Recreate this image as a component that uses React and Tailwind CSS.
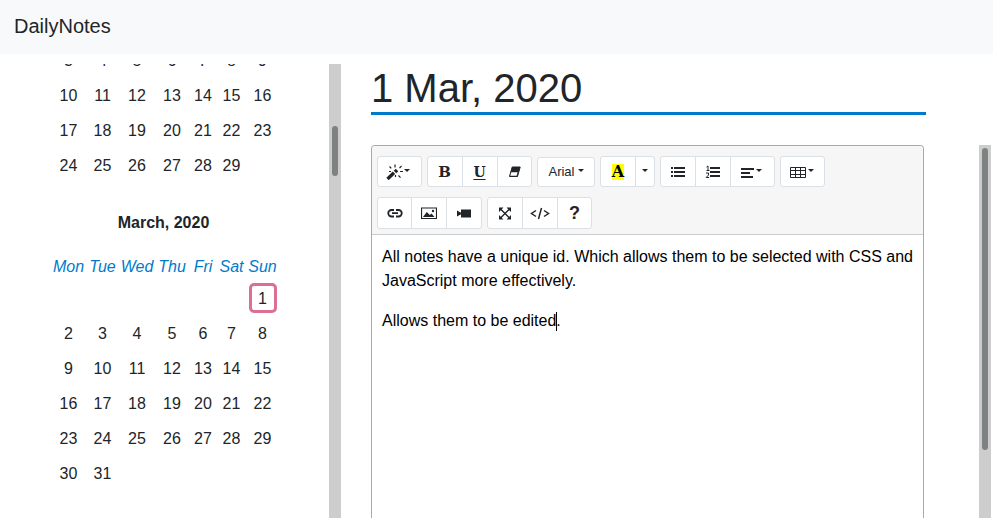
import React from "react";

const DAYS = ["Mon", "Tue", "Wed", "Thu", "Fri", "Sat", "Sun"];

const FEBRUARY = [
  [3, 4, 5, 6, 7, 8, 9],
  [10, 11, 12, 13, 14, 15, 16],
  [17, 18, 19, 20, 21, 22, 23],
  [24, 25, 26, 27, 28, 29, null],
];

const MARCH = [
  [null, null, null, null, null, null, 1],
  [2, 3, 4, 5, 6, 7, 8],
  [9, 10, 11, 12, 13, 14, 15],
  [16, 17, 18, 19, 20, 21, 22],
  [23, 24, 25, 26, 27, 28, 29],
  [30, 31, null, null, null, null, null],
];

function Columns() {
  return (
    <colgroup>
      <col className="w-[35px]" />
      <col className="w-[33px]" />
      <col className="w-[36px]" />
      <col className="w-[34px]" />
      <col className="w-[28px]" />
      <col className="w-[29px]" />
      <col className="w-[33px]" />
    </colgroup>
  );
}

function Weeks({ weeks, selected }) {
  return (
    <tbody>
      {weeks.map((week, i) => (
        <tr key={i} className="h-[35px]">
          {week.map((day, j) => (
            <td key={j} className="p-0 text-center align-top">
              {day && (
                <button
                  type="button"
                  className={
                    day === selected
                      ? "mx-auto mt-[2px] block h-[30px] w-7 rounded-[5px] border-3 border-[#db7093] leading-[26px]"
                      : "mx-auto mt-[2px] block h-[30px] w-7 leading-8"
                  }
                >
                  {day}
                </button>
              )}
            </td>
          ))}
        </tr>
      ))}
    </tbody>
  );
}

function Scrollbar({ children }) {
  return <div className="w-3 shrink-0 bg-[#cdcdcd] px-[3px]">{children}</div>;
}

function Icon({ children }) {
  return (
    <svg viewBox="0 0 16 16" className="size-4 shrink-0" fill="none" stroke="currentColor" aria-hidden="true">
      {children}
    </svg>
  );
}

function Caret() {
  return <span className="mb-[2px] border-x-3 border-t-3 border-x-transparent border-t-current" />;
}

function Group({ children }) {
  return (
    <div className="flex -space-x-px *:border *:border-[#dae0e5] *:bg-white *:first:rounded-l-[3px] *:last:rounded-r-[3px]">
      {children}
    </div>
  );
}

function Tool({ label, className = "h-[31px] w-9", children }) {
  return (
    <button type="button" aria-label={label} className={`flex items-center justify-center ${className}`}>
      {children}
    </button>
  );
}

function Toolbar() {
  return (
    <div className="border-b border-[#ccc] bg-[#f6f6f6] px-[5px] pt-[10px] pb-[5px]">
      <div className="flex items-center gap-[5px]">
        <Group>
          <Tool label="Style" className="h-[31px] w-[45px] pr-[3px]">
            <svg viewBox="0 0 18 16" className="h-4 w-[18px] shrink-0" fill="none" stroke="currentColor" aria-hidden="true">
              <path d="M1.500 15L8 8.800" strokeWidth="3.400" />
              <path d="M9 8l2-2" strokeWidth="3.600" />
              <path d="M9 0.500v3M3.500 2.500l1.800 1.800M15.500 2l-2 2.200M14 7.500h3M12.500 11.500l2 2.200M3 7.500h2M9.500 11v2" strokeWidth="1.200" />
            </svg>
            <Caret />
          </Tool>
        </Group>
        <Group>
          <Tool label="Bold"><span className="pr-px font-['DejaVu_Serif',serif] text-[15px] leading-5 font-bold">B</span></Tool>
          <Tool label="Underline"><span className="pr-px font-['DejaVu_Serif',serif] text-sm leading-5 font-bold underline underline-offset-2">U</span></Tool>
          <Tool label="Remove font style" className="h-[31px] w-[35px]">
            <Icon>
              <path d="M5.200 3h8l-2.700 9.500h-8z" fill="currentColor" strokeWidth="1" />
              <path d="M4.300 8.300h6.300l-1 3.500H3.300z" fill="#fff" stroke="none" />
            </Icon>
          </Tool>
        </Group>
        <Group>
          <Tool label="Font family" className="h-[30px] w-[58px] gap-[3px] text-[13px]">Arial<Caret /></Tool>
        </Group>
        <Group>
          <Tool label="Recent color"><span className="bg-[#ff0] font-['DejaVu_Serif',serif] text-base leading-4 font-bold text-black">A</span></Tool>
          <Tool label="More color" className="h-[31px] w-5"><Caret /></Tool>
        </Group>
        <Group>
          <Tool label="Unordered list">
            <Icon>
              <path d="M1 4h2M1 8h2M1 12h2M4 4h11M4 8h11M4 12h11" strokeWidth="2" />
            </Icon>
          </Tool>
          <Tool label="Ordered list">
            <Icon>
              <path d="M5 4h10M5 8h10M5 12h10" strokeWidth="2" />
              <path d="M1.500 3l1.500-1v4.500M1.500 6.500h3M1 9h2.500v2L1.200 13.500h3" strokeWidth="1" />
            </Icon>
          </Tool>
          <Tool label="Paragraph" className="h-[31px] w-[45px] pr-[3px]">
            <Icon>
              <path d="M1 5h13M1 9h9M1 13h12" strokeWidth="2" />
            </Icon>
            <Caret />
          </Tool>
        </Group>
        <Group>
          <Tool label="Table" className="h-[31px] w-[45px] gap-[2px] pr-[2px]">
            <Icon>
              <path d="M0.500 3.500h15v10h-15zM0.500 6.500h15M0.500 10.500h15M5.500 3.500v10M10.500 3.500v10" />
            </Icon>
            <Caret />
          </Tool>
        </Group>
      </div>
      <div className="mt-[10px] flex gap-[5px]">
        <Group>
          <Tool label="Link" className="h-8 w-[35px]">
            <Icon>
              <path d="M7 5H4.500a3.200 3.200 0 0 0 0 6.500H7M9 5h2.500a3.200 3.200 0 0 1 0 6.500H9M5 8.200h6" strokeWidth="1.800" />
            </Icon>
          </Tool>
          <Tool label="Picture" className="h-8 w-9">
            <Icon>
              <path d="M0.500 3h15v10.500h-15z" strokeWidth="1.200" />
              <path d="M2 12l3.800-5 3 3 1.700-1.500 3 3.500z" fill="currentColor" stroke="none" />
              <circle cx="12" cy="6" r="1.200" fill="currentColor" stroke="none" />
            </Icon>
          </Tool>
          <Tool label="Video" className="h-8 w-9">
            <Icon>
              <path d="M5 4.500h10v8H5zM1 5.500l4 2.300v1.400l-4 2.300z" fill="currentColor" stroke="none" />
            </Icon>
          </Tool>
        </Group>
        <Group>
          <Tool label="Full screen" className="h-8 w-9">
            <Icon>
              <path d="M3 3.500l10 10M13 3.500l-10 10" strokeWidth="1.400" />
              <path d="M2 2.500h4.500L2 7zM14 2.500V7L9.500 2.500zM2 14.500V10l4.500 4.500zM14 14.500H9.500L14 10z" fill="currentColor" stroke="none" />
            </Icon>
          </Tool>
          <Tool label="Code view" className="h-8 w-9">
            <svg viewBox="0 0 20 16" className="h-4 w-5" fill="none" stroke="currentColor" strokeWidth="1.500" aria-hidden="true">
              <path d="M6 5.500L1.500 8.500 6 11.500M14 5.500l4.500 3L14 11.500M11.500 3l-3 11" />
            </svg>
          </Tool>
          <Tool label="Help" className="h-8 w-[35px]"><span className="text-lg leading-5 font-bold">?</span></Tool>
        </Group>
      </div>
    </div>
  );
}

export default function App() {
  return (
    <div className="flex h-screen flex-col overflow-hidden bg-white font-['Liberation_Sans',Arial,sans-serif] text-base text-[#212529]">
      <header className="flex h-[54px] shrink-0 items-center bg-[#f8f9fb] px-[14px] pb-[2px]">
        <a href="#" className="text-xl leading-[30px]">DailyNotes</a>
      </header>
      <div className="flex min-h-0 flex-1 pt-[10px]">
        <aside className="flex w-[341px] shrink-0">
          <nav aria-label="Calendar" className="flex-1 overflow-hidden pl-[51px]">
            <table className="-mt-[21px] w-[228px] table-fixed border-collapse">
              <Columns />
              <Weeks weeks={FEBRUARY} />
            </table>
            <h2 className="mt-7 w-[225px] text-center leading-6 font-bold">March, 2020</h2>
            <table className="mt-5 w-[228px] table-fixed border-collapse">
              <Columns />
              <thead>
                <tr className="h-[26px]">
                  {DAYS.map((day) => (
                    <th key={day} className="p-0 align-top leading-6 font-normal text-[#007bcc] italic">
                      <span className="flex justify-center">{day}</span>
                    </th>
                  ))}
                </tr>
              </thead>
              <Weeks weeks={MARCH} selected={1} />
            </table>
          </nav>
          <Scrollbar>
            <div className="mt-[62px] h-[50px] rounded-full bg-[#7e8282]" />
          </Scrollbar>
        </aside>
        <main className="flex min-w-0 flex-1 flex-col pr-[2px] pl-[30px]">
          <h1 className="mr-[65px] border-b-3 border-[#007bcc] text-[40px] leading-[48px]">1 Mar, 2020</h1>
          <div className="mt-[30px] flex min-h-0 flex-1">
            <div className="mr-[55px] min-w-0 flex-1 overflow-hidden rounded-t border border-b-0 border-[#a9a9a9]">
              <Toolbar />
              <div role="textbox" aria-multiline="true" aria-label="Note" className="p-[10px] leading-6 text-black">
                <p>All notes have a unique id. Which allows them to be selected with CSS and JavaScript more effectively.</p>
                <p className="mt-4">
                  Allows them to be edited
                  <span className="-mr-px inline-block h-[19px] w-px bg-black align-middle" />.
                </p>
              </div>
            </div>
            <Scrollbar>
              <div className="mt-[3px] h-[302px] rounded-full bg-[#7e8282]" />
            </Scrollbar>
          </div>
        </main>
      </div>
    </div>
  );
}
